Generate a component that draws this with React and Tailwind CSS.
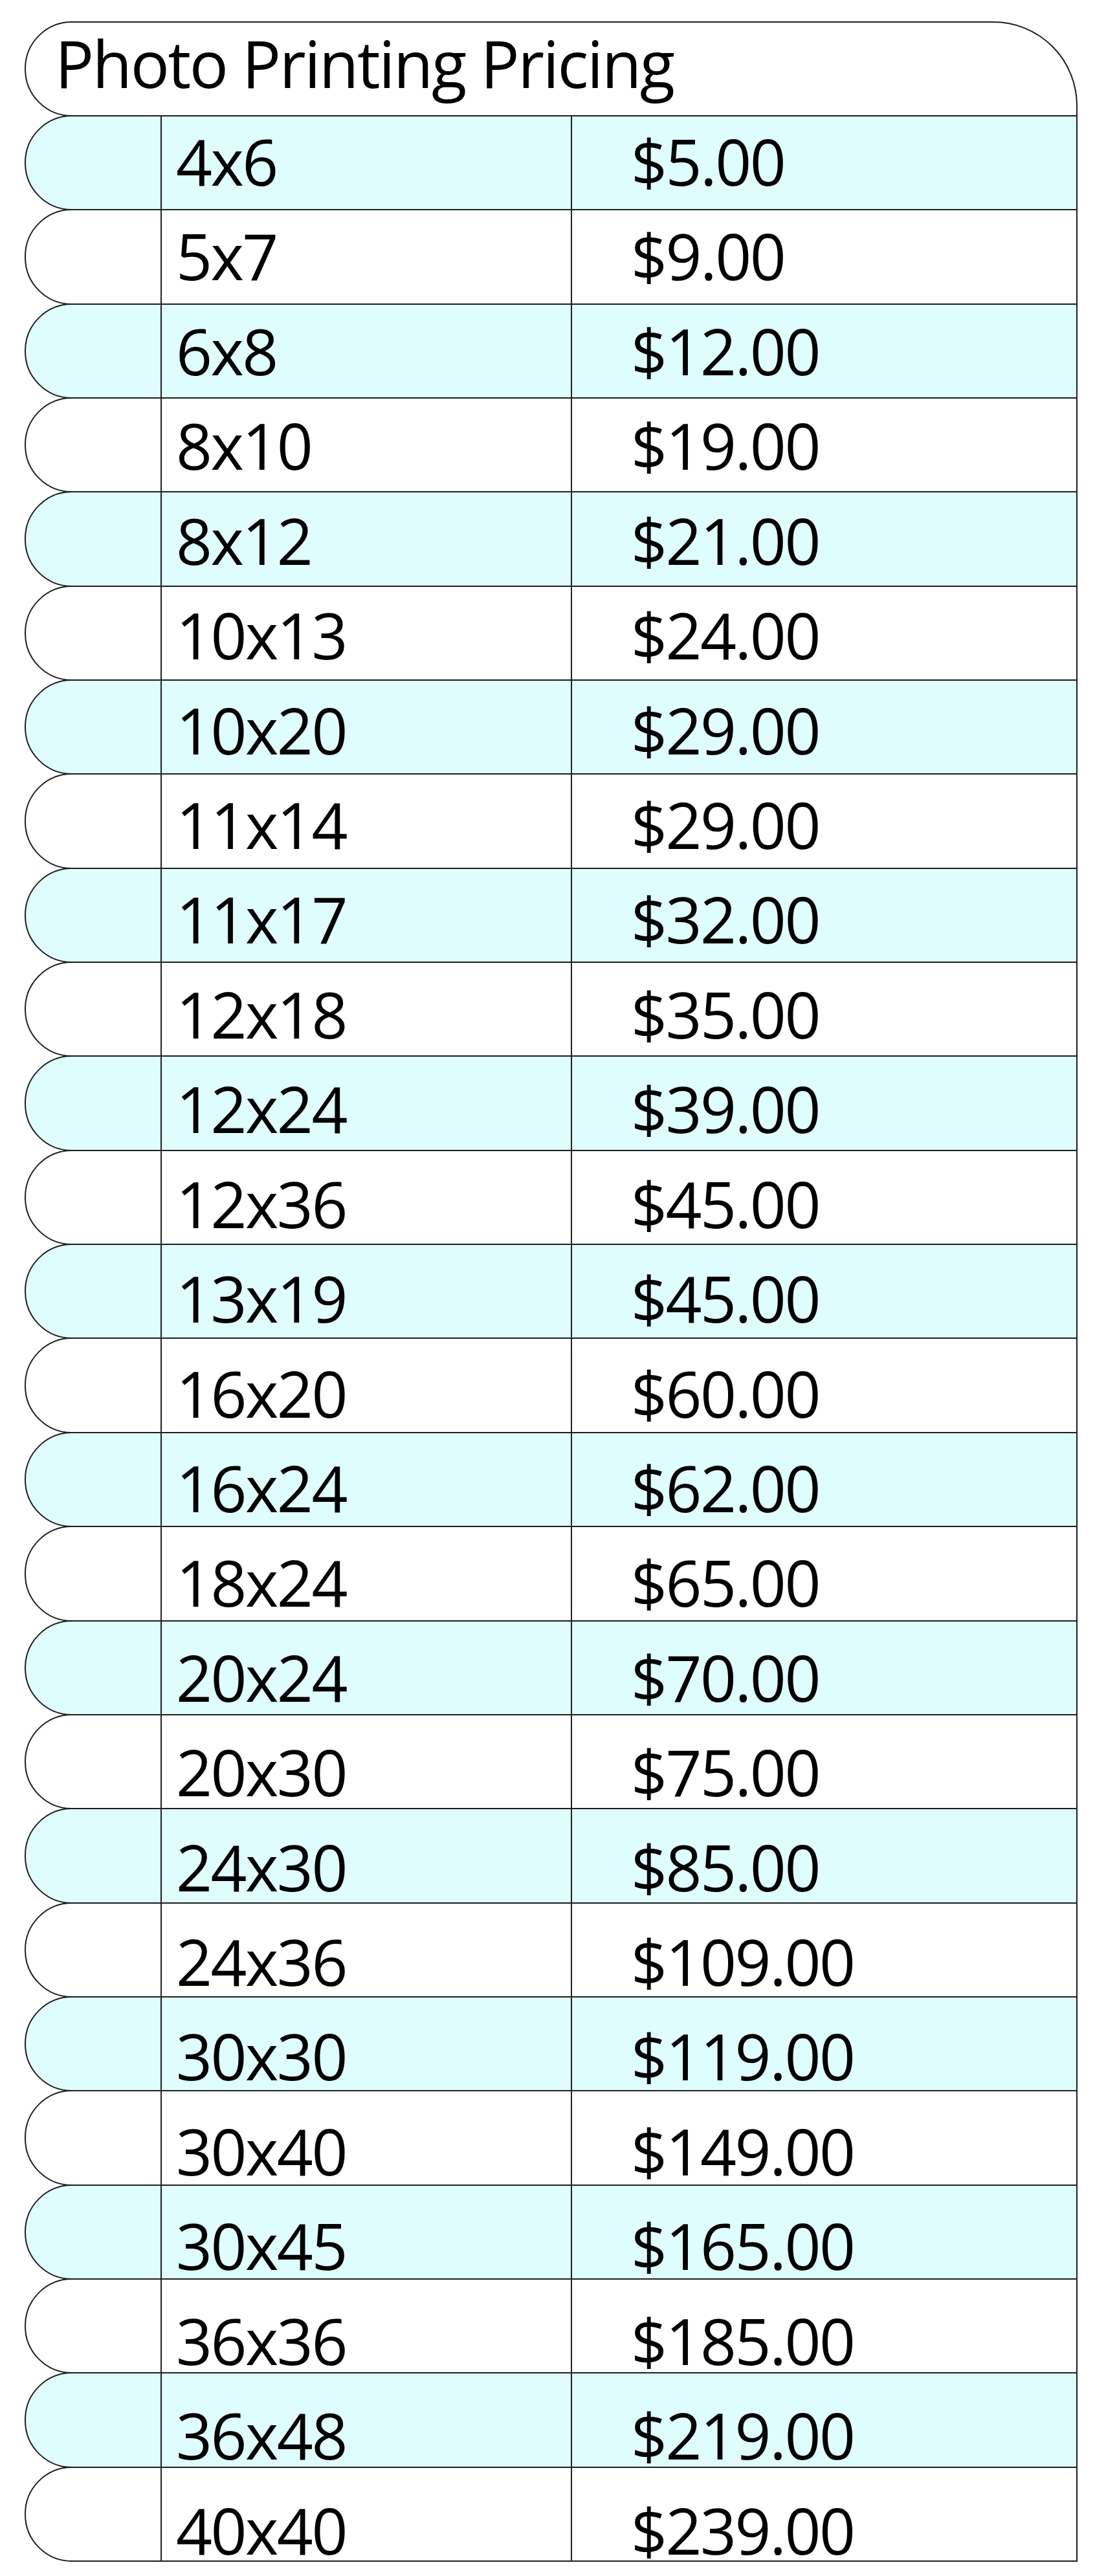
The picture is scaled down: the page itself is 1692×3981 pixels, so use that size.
import React from 'react';

const prices = [
  ['4x6', '$5.00'],
  ['5x7', '$9.00'],
  ['6x8', '$12.00'],
  ['8x10', '$19.00'],
  ['8x12', '$21.00'],
  ['10x13', '$24.00'],
  ['10x20', '$29.00'],
  ['11x14', '$29.00'],
  ['11x17', '$32.00'],
  ['12x18', '$35.00'],
  ['12x24', '$39.00'],
  ['12x36', '$45.00'],
  ['13x19', '$45.00'],
  ['16x20', '$60.00'],
  ['16x24', '$62.00'],
  ['18x24', '$65.00'],
  ['20x24', '$70.00'],
  ['20x30', '$75.00'],
  ['24x30', '$85.00'],
  ['24x36', '$109.00'],
  ['30x30', '$119.00'],
  ['30x40', '$149.00'],
  ['30x45', '$165.00'],
  ['36x36', '$185.00'],
  ['36x48', '$219.00'],
  ['40x40', '$239.00'],
];

export default function App() {
  return (
    <div
      className="min-h-[3981px] w-[1692px] bg-white pl-[38px] pt-[33px] text-black"
      style={{ fontFamily: '"Open Sans", "Noto Sans", sans-serif' }}
    >
      <div className="flex w-[1627px] flex-col">
        {/* header */}
        <div className="h-[147px] rounded-l-[73px] rounded-tr-[130px] border-2 border-[#1e1e1e] bg-white pl-[45px] pt-[12px]">
          <h1 className="text-[100px] leading-none font-normal tracking-[-2.4px]">Photo Printing Pricing</h1>
        </div>

        {prices.map(([size, price], i) => (
          <div
            key={size}
            className={`-mt-[2px] grid h-[147.35px] grid-cols-[208px_634px_1fr] rounded-l-[73px] border-2 border-[#1e1e1e] ${
              i % 2 === 0 ? 'bg-[#dffdfc]' : 'bg-white'
            }`}
          >
            <div />
            <div className="border-l-2 border-[#1e1e1e] pl-[22px]" style={{ paddingTop: 30 + i * 1.08 }}>
              <span className="block text-[98px] leading-[0.8] tracking-[-2.5px]">{size}</span>
            </div>
            <div className="border-l-2 border-[#1e1e1e] pl-[91px]" style={{ paddingTop: 30 + i * 1.08 }}>
              <span className="block text-[98px] leading-[0.8] tracking-[-2.5px]">{price}</span>
            </div>
          </div>
        ))}
      </div>
    </div>
  );
}
